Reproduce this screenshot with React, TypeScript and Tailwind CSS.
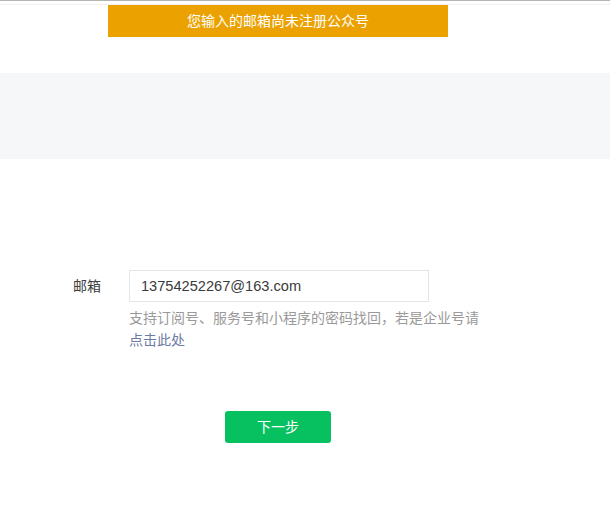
export default function App() {
    return (
        <div
            className="relative min-h-[507px] bg-white text-sm"
            style={{ fontFamily: '"Liberation Sans", "Noto Sans CJK SC", sans-serif' }}
        >
            {/* top edge */}
            <div className="h-px bg-[#b3b3b3]" />
            <div className="h-[3px] bg-white" />
            <div className="h-[69px] border-t border-[#f0f0f0]" />

            {/* grey header band */}
            <div className="h-[86px] bg-[#f6f7f9]" />

            {/* toast */}
            <div className="absolute left-[108px] top-[5px] flex h-[32px] w-[340px] items-center justify-center bg-[#eba200] text-[14px] text-white">
                您输入的邮箱尚未注册公众号
            </div>

            {/* form */}
            <div className="pl-[73px] pt-[111px]">
                <div className="flex">
                    <label className="w-[56px] pt-[6px] text-[14px] leading-[20px] text-[#3e3e3e]">邮箱</label>
                    <div>
                        <div className="flex h-[32px] w-[300px] items-center border border-[#e4e4e4] px-[11px] text-[14.6px] text-[#3a3a3a]">
                            13754252267@163.com
                        </div>
                        <p className="mt-[5px] w-[352px] text-[14px] leading-[22px] text-[#9a9a9a]">
                            支持订阅号、服务号和小程序的密码找回，若是企业号请
                            <br />
                            <a className="text-[#6b7ca3]">点击此处</a>
                        </p>
                    </div>
                </div>
                <div className="mt-[60px] pl-[152px]">
                    <button className="flex h-[32px] w-[106px] items-center justify-center rounded-[3px] bg-[#07c160] text-[14px] text-white">
                        下一步
                    </button>
                </div>
            </div>
        </div>
    );
}
